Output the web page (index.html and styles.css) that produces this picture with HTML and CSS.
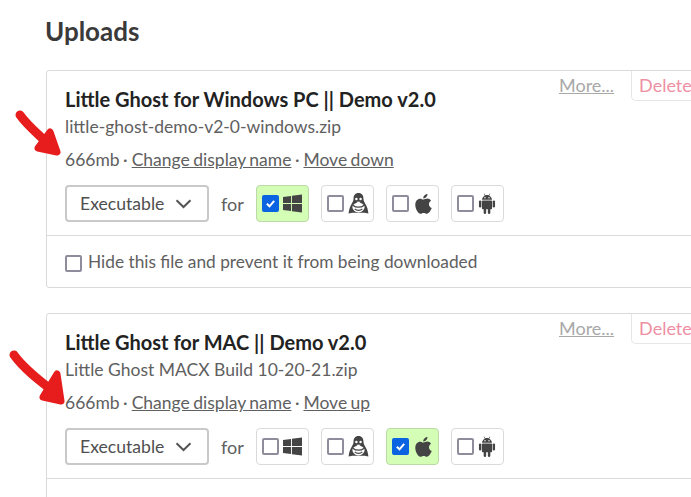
FILE: index.html
```html
<!DOCTYPE html>
<html lang="en">
<head>
<meta charset="utf-8">
<title>Uploads</title>
<link rel="stylesheet" href="styles.css">
</head>
<body>
<svg width="0" height="0" class="defs">
  <symbol id="i-win" viewBox="0 0 20 20"><path d="M0 3.200 8.400 2v7.400H0zM9.400 1.900 20 .4v9H9.400zM0 10.500h8.400V18L0 16.800zM9.400 10.500H20v9.100L9.400 18.100z"/></symbol>
  <symbol id="i-tux" viewBox="0 0 22 22"><path d="M11 0C7.300 0 5.800 2.800 5.800 6c0 2.600-1.300 4-2.500 6.200C2 14.600 1 17.500.6 21.500l4-.9h12.800l4 .9c-.4-4-1.400-6.900-2.700-9.300C17.500 10 16.200 8.600 16.200 6 16.200 2.800 14.700 0 11 0z"/><path fill="#fff" d="M11 9.200c-1.500 1.200-5.600 1.900-6.300 5 -.6 2.800 2.700 6.300 6.300 6.300s6.900-3.500 6.300-6.300c-.7-3.100-4.800-3.800-6.300-5z"/><path fill="none" stroke="#444" stroke-width="1.300" d="M5.200 12.800c3 2.800 8.600 2.800 11.600 0M7 16.600c2.200 2 5.800 2 8 0"/><circle cx="8.800" cy="6.200" r="1.300" fill="#fff"/><circle cx="13.200" cy="6.200" r="1.300" fill="#fff"/><path fill="#fff" d="M9 9.200h4l-2 1.800z"/></symbol>
  <symbol id="i-apple" viewBox="0 0 18 21"><path d="M13.200 0c.1 2.500-2.100 4.800-4.400 4.600C8.600 2.300 10.900.1 13.200 0zM9 5.800c1 0 2.300-1 4.100-1 1.500 0 3 .8 3.900 2.200-3.300 1.900-2.700 6.400.7 7.700-.9 2.400-3 6-5 6-1.300 0-1.900-.8-3.500-.8s-2.200.8-3.500.8C3.400 20.700.3 15.700.3 11.500.3 7.400 2.900 5 5.300 5 6.800 5 8 5.800 9 5.800z"/></symbol>
  <symbol id="i-android" viewBox="0 0 20 24"><path d="M4.200 7.600C4.500 5.300 6 3.700 7.500 3L6.300.9l.5-.3L8 2.700c1.300-.5 2.700-.5 4 0L13.200.6l.5.3L12.500 3c1.500.7 3 2.300 3.300 4.600z"/><rect x="4.200" y="8.500" width="11.600" height="10" rx="1"/><rect x="0.800" y="8.500" width="2.700" height="8" rx="1.350"/><rect x="16.500" y="8.500" width="2.700" height="8" rx="1.350"/><rect x="6.200" y="16" width="2.800" height="8" rx="1.400"/><rect x="11" y="16" width="2.800" height="8" rx="1.400"/><circle cx="7.700" cy="5.500" r=".8" fill="#fff"/><circle cx="12.300" cy="5.500" r=".8" fill="#fff"/></symbol>
</svg>

<main class="page">
  <h2 class="heading">Uploads</h2>

  <section class="card">
    <div class="actions"><a class="more">More...</a><a class="delete">Delete</a></div>
    <div class="body">
      <div class="title">Little Ghost for Windows PC || Demo v2.0</div>
      <div class="filename">little-ghost-demo-v2-0-windows.zip</div>
      <div class="meta">666mb · <a>Change display name</a> · <a>Move down</a></div>
      <div class="controls">
        <div class="select">Executable<svg class="chev" viewBox="0 0 17 10"><path d="M1.500 1.200 8.500 8l7-6.800"/></svg></div>
        <span class="for">for</span>
        <div class="plat on"><span class="box checked"><svg viewBox="0 0 16 16"><path d="M3.500 8.300 6.800 11.500 12.500 4.800"/></svg></span><svg class="ico win"><use href="#i-win"/></svg></div>
        <div class="plat"><span class="box"></span><svg class="ico tux"><use href="#i-tux"/></svg></div>
        <div class="plat"><span class="box"></span><svg class="ico apple"><use href="#i-apple"/></svg></div>
        <div class="plat"><span class="box"></span><svg class="ico android"><use href="#i-android"/></svg></div>
      </div>
    </div>
    <div class="footer"><span class="box low"></span>Hide this file and prevent it from being downloaded</div>
  </section>

  <section class="card">
    <div class="actions"><a class="more">More...</a><a class="delete">Delete</a></div>
    <div class="body">
      <div class="title">Little Ghost for MAC || Demo v2.0</div>
      <div class="filename">Little Ghost MACX Build 10-20-21.zip</div>
      <div class="meta">666mb · <a>Change display name</a> · <a>Move up</a></div>
      <div class="controls">
        <div class="select">Executable<svg class="chev" viewBox="0 0 17 10"><path d="M1.500 1.200 8.500 8l7-6.800"/></svg></div>
        <span class="for">for</span>
        <div class="plat"><span class="box"></span><svg class="ico win"><use href="#i-win"/></svg></div>
        <div class="plat"><span class="box"></span><svg class="ico tux"><use href="#i-tux"/></svg></div>
        <div class="plat on"><span class="box checked"><svg viewBox="0 0 16 16"><path d="M3.500 8.300 6.800 11.500 12.500 4.800"/></svg></span><svg class="ico apple"><use href="#i-apple"/></svg></div>
        <div class="plat"><span class="box"></span><svg class="ico android"><use href="#i-android"/></svg></div>
      </div>
    </div>
    <div class="footer"><span class="box low"></span>Hide this file and prevent it from being downloaded</div>
  </section>
</main>

<svg class="annot" viewBox="0 0 691 497" width="691" height="497">
  <path class="arrow" d="M20 115C27 125 38 134 47 143"/>
  <path class="head" d="M50 132 57 152 38 148z"/>
  <path class="arrow" d="M14 355C24 369 40 381 53 391"/>
  <path class="head" d="M57 374 61 401 43 397z"/>
</svg>
</body>
</html>
```
FILE: styles.css
```css
html, body { margin: 0; padding: 0; }
body {
  width: 691px;
  height: 497px;
  overflow: hidden;
  position: relative;
  background: #fff;
  font-family: Lato, "Open Sans", sans-serif;
  color: #606060;
}
.defs { position: absolute; }
.page { padding: 15px 0 0 46px; width: 700px; }
.heading {
  margin: 0 0 23px -1px;
  font-size: 26px;
  line-height: 32px;
  font-weight: 700;
  color: #3a3a3a;
}
.card {
  position: relative;
  box-sizing: border-box;
  width: 700px;
  margin-bottom: 25px;
  border: 1px solid #dadada;
  border-radius: 3px;
  background: #fff;
}
.actions {
  position: absolute;
  top: 0;
  left: 512px;
  display: flex;
  align-items: flex-start;
  font-size: 18px;
  line-height: 28px;
}
.more {
  color: #a8a8a8;
  text-decoration: underline;
  margin-right: 17px;
}
.delete {
  color: #ee8fa3;
  padding: 0 10px 1px 7px;
  border-left: 1px solid #e6e6e6;
  border-bottom: 1px solid #e6e6e6;
  border-bottom-left-radius: 5px;
}
.body { padding: 15px 18px 13px; }
.title {
  font-size: 20px;
  line-height: 27px;
  font-weight: 700;
  color: #222;
}
.filename { font-size: 17.500px; line-height: 28px; }
.meta { font-size: 17.500px; line-height: 28px; margin-top: 5px; word-spacing: -1px; }
.meta a { text-decoration: underline; margin-left: .5px; }
.controls {
  display: flex;
  align-items: center;
  margin-top: 11px;
}
.select {
  box-sizing: border-box;
  width: 144px;
  height: 37px;
  padding: 0 15px 0 13px;
  display: flex;
  align-items: center;
  justify-content: space-between;
  border: 2px solid #c9c9c9;
  border-radius: 4px;
  font-size: 17.600px;
  color: #4f4f4f;
}
.chev { width: 17px; height: 10px; fill: none; stroke: #555; stroke-width: 2; }
.for { margin: 0 12px; font-size: 18px; color: #606060; }
.plat {
  box-sizing: border-box;
  width: 53px;
  height: 37px;
  margin-right: 12px;
  padding-left: 5px;
  display: flex;
  align-items: center;
  gap: 4px;
  border: 1px solid #dadada;
  border-radius: 4px;
}
.plat.on { background: #d4fdb6; border-color: #bcdaa8; }
.box {
  box-sizing: border-box;
  display: inline-block;
  flex: none;
  width: 17px;
  height: 17px;
  border: 2px solid #8f8d9c;
  border-radius: 2px;
  background: #fff;
}
.box.low { margin-top: 3px; }
.box.checked {
  background: #0a63e0;
  border-color: #0a63e0;
  display: flex;
}
.box.checked svg { width: 13px; height: 13px; fill: none; stroke: #fff; stroke-width: 2.500; }
.ico { fill: #444; flex: none; }
.win { width: 19px; height: 19px; }
.tux { width: 21px; height: 21px; }
.apple { width: 17px; height: 20px; margin-left: 2px; }
.android { width: 18px; height: 21px; }
.footer {
  border-top: 1px solid #dadada;
  height: 51px;
  padding-left: 18px;
  display: flex;
  align-items: center;
  gap: 6px;
  font-size: 17.300px;
  color: #606060;
}
.annot { position: absolute; left: 0; top: 0; pointer-events: none; }
.arrow { fill: none; stroke: #e71d1d; stroke-width: 9; stroke-linecap: round; }
.head { fill: #e71d1d; stroke: #e71d1d; stroke-width: 7; stroke-linejoin: round; }
```
